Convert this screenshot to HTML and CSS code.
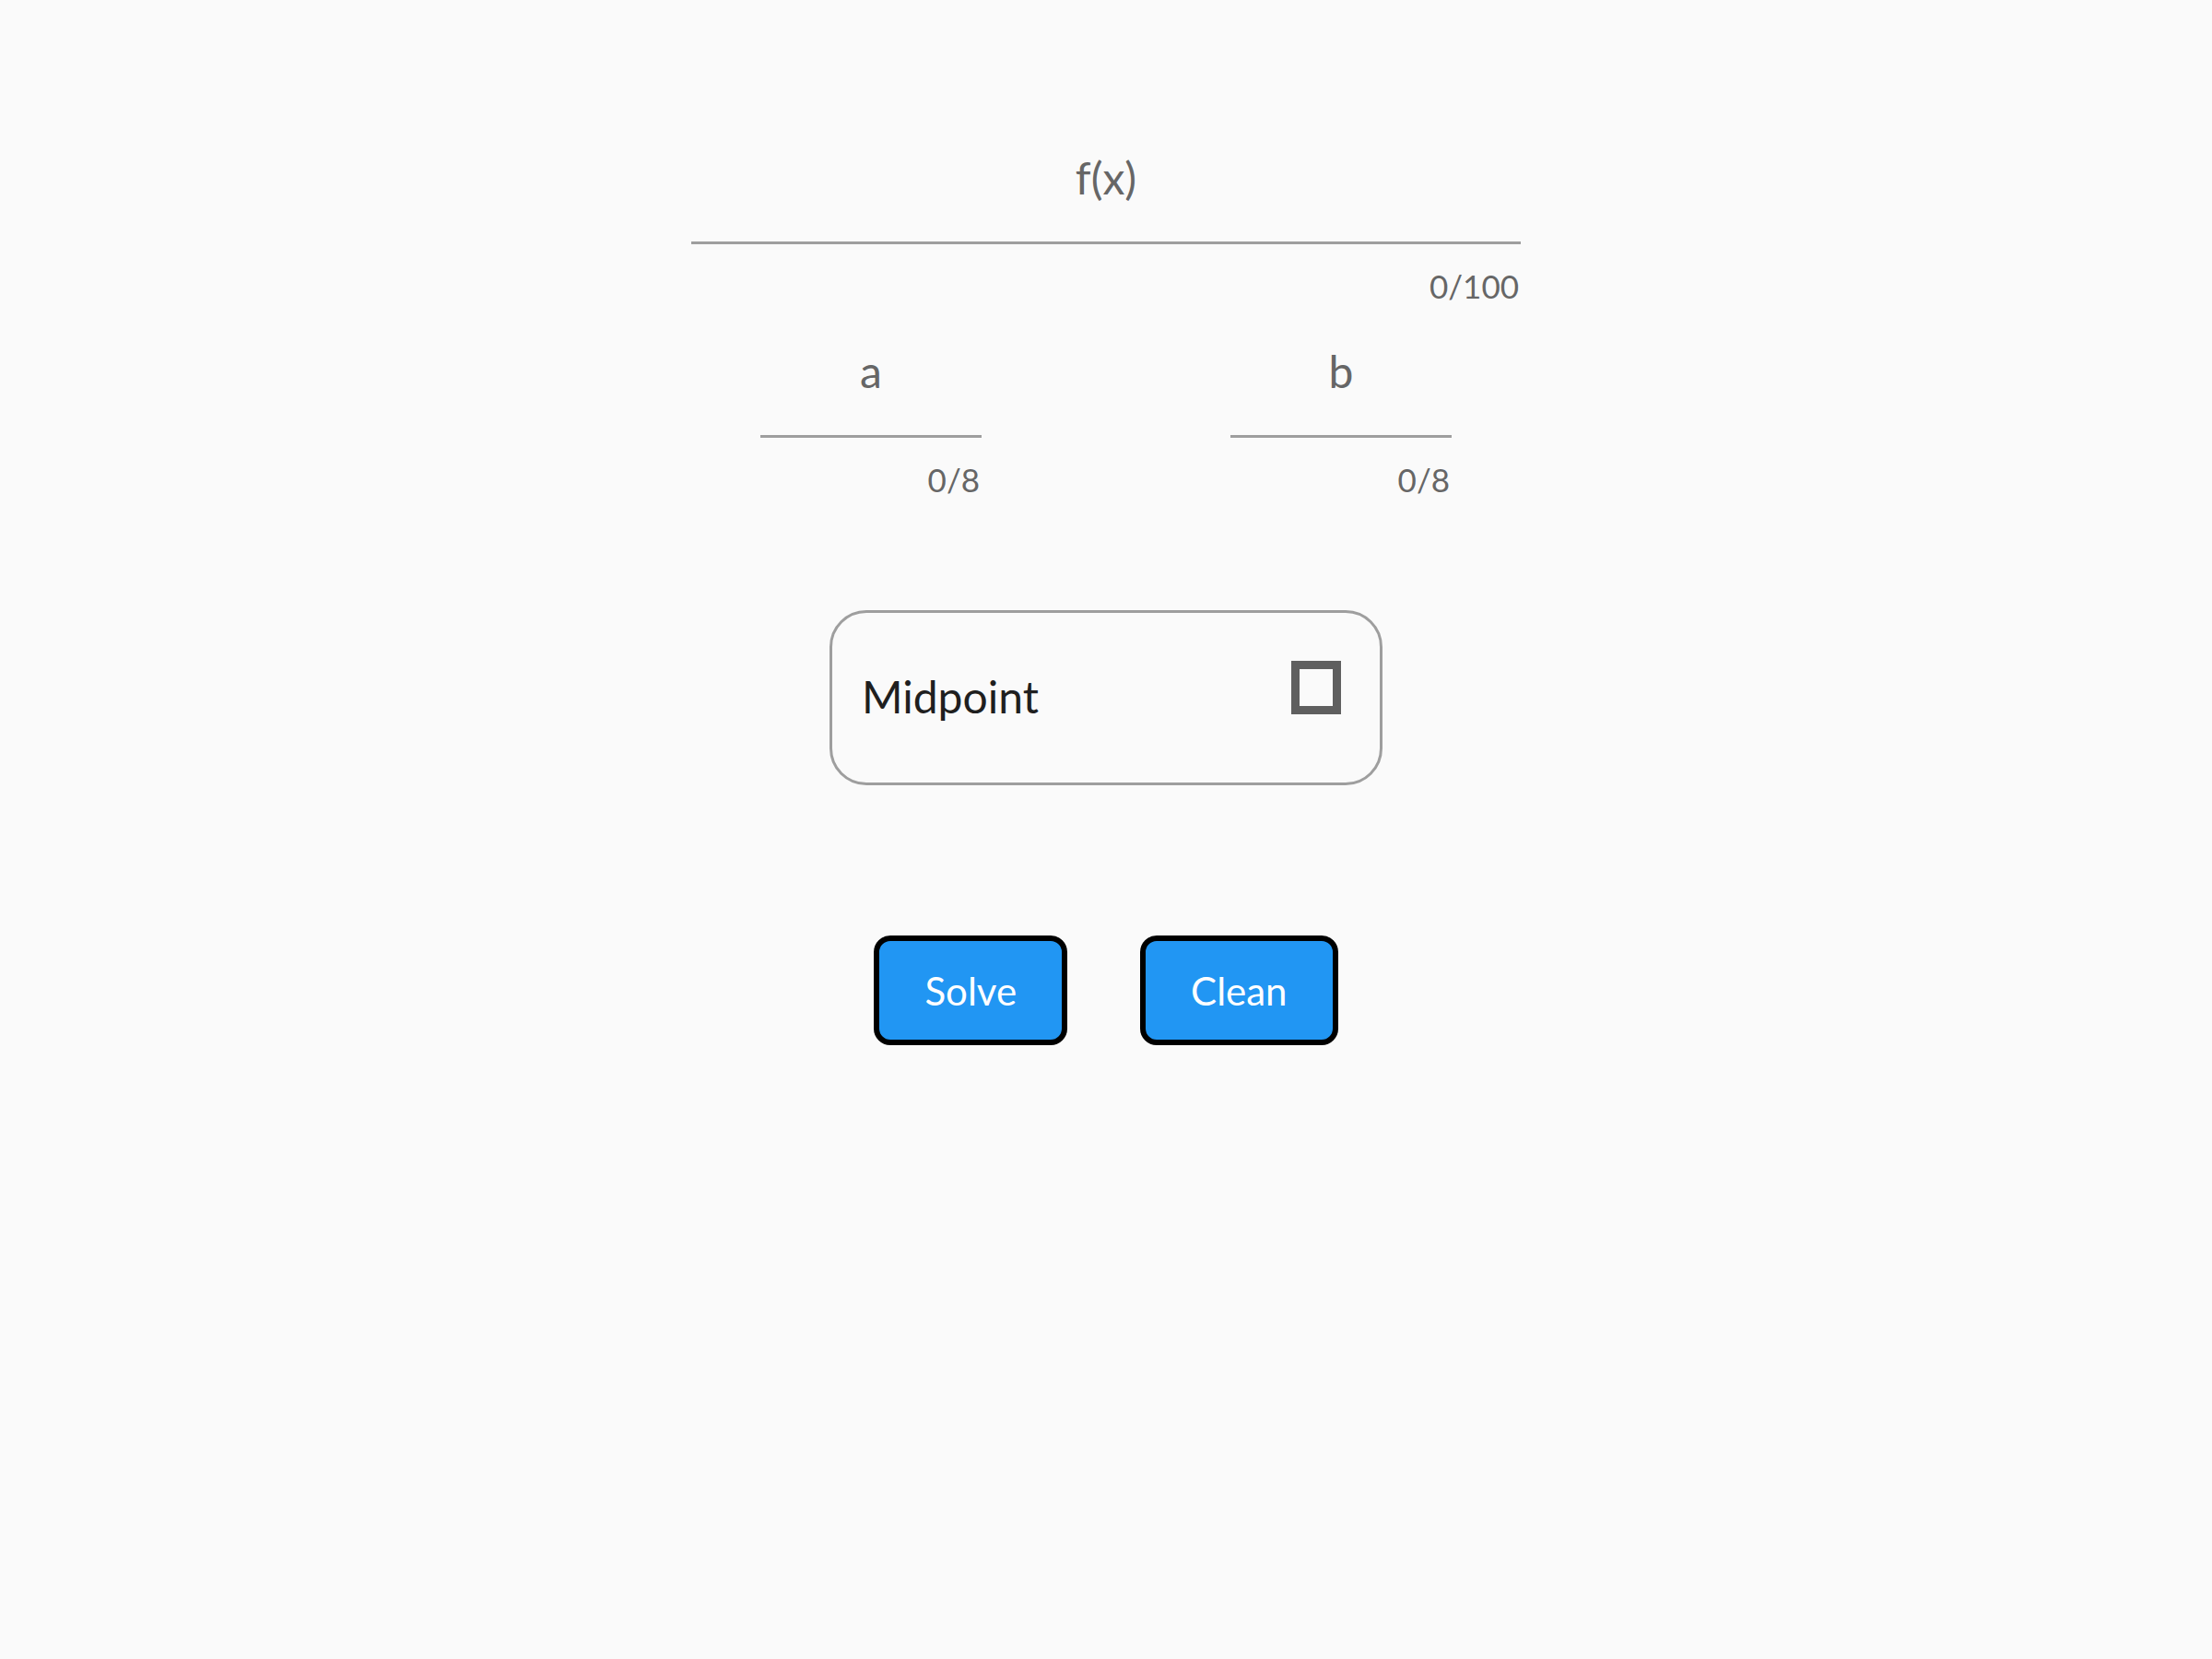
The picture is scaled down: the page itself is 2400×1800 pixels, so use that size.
FILE: index.html
```html
<!DOCTYPE html>
<html lang="en">
<head>
<meta charset="utf-8">
<title>Root finder</title>
<link rel="stylesheet" href="styles.css">
</head>
<body>
<main class="page">
  <div class="field field-wide">
    <div class="input">f(x)</div>
    <div class="counter">0/100</div>
  </div>
  <div class="range-row">
    <div class="field field-small">
      <div class="input">a</div>
      <div class="counter">0/8</div>
    </div>
    <div class="field field-small">
      <div class="input">b</div>
      <div class="counter">0/8</div>
    </div>
  </div>
  <div class="check-tile">
    <span class="check-label">Midpoint</span>
    <span class="check-box"></span>
  </div>
  <div class="actions">
    <button class="btn">Solve</button>
    <button class="btn">Clean</button>
  </div>
</main>
</body>
</html>
```

FILE: styles.css
```css
html, body {
  margin: 0;
  padding: 0;
  background: #fafafa;
}

body {
  font-family: "Lato", "Liberation Sans", sans-serif;
  width: 2400px;
  height: 1800px;
}

.page {
  width: 900px;
  margin: 0 auto;
  padding-top: 164px;
  display: flex;
  flex-direction: column;
  align-items: center;
}

.field {
  display: flex;
  flex-direction: column;
}

.field-wide {
  width: 900px;
}

.field-small {
  width: 240px;
}

.input {
  font-size: 48px;
  line-height: 58px;
  color: #666666;
  text-align: center;
  padding-bottom: 40px;
  border-bottom: 3px solid #9e9e9e;
}

.counter {
  margin-top: 24px;
  font-size: 35px;
  line-height: 43px;
  color: #666666;
  text-align: right;
  padding-right: 2px;
}

.range-row {
  margin-top: 42px;
  width: 750px;
  display: flex;
  justify-content: space-between;
}

.check-tile {
  margin-top: 120px;
  box-sizing: border-box;
  width: 600px;
  height: 190px;
  border: 3px solid #9e9e9e;
  border-radius: 40px;
  display: flex;
  align-items: center;
  justify-content: space-between;
  padding: 0 42px 0 32px;
}

.check-label {
  font-size: 48px;
  line-height: 58px;
  color: #1f1f1f;
  margin-top: -2px;
}

.check-box {
  align-self: flex-start;
  margin-top: 52px;
  box-sizing: border-box;
  width: 54px;
  height: 58px;
  border: 9px solid #5f5f5f;
}

.actions {
  margin-top: 163px;
  display: flex;
  gap: 79px;
}

.btn {
  box-sizing: border-box;
  height: 119px;
  padding: 0 49px;
  border: 6px solid #000000;
  border-radius: 18px;
  background: #2196f3;
  color: #ffffff;
  font-family: "Lato", "Liberation Sans", sans-serif;
  font-size: 42px;
  line-height: 50px;
  cursor: pointer;
}
```
